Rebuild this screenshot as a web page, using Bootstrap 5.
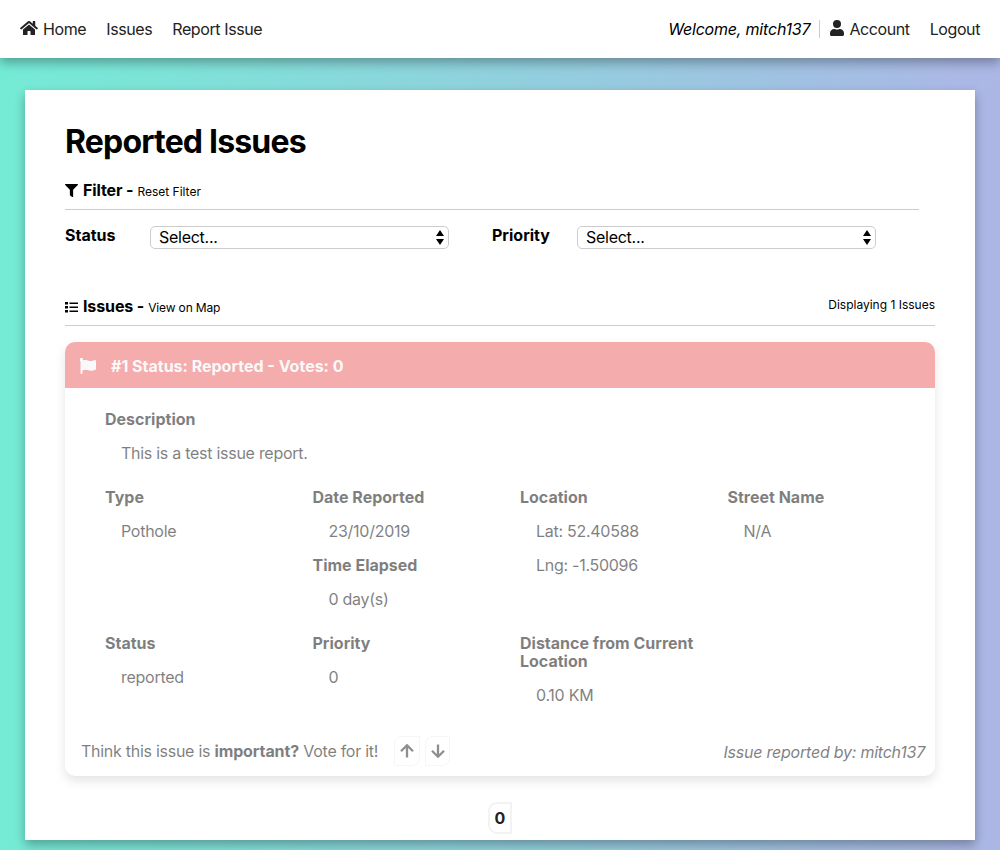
<!DOCTYPE html>
<html lang="en">
<head>
<meta charset="utf-8">
<meta name="viewport" content="width=device-width, initial-scale=1">
<title>Reported Issues</title>
<link rel="stylesheet" href="https://cdn.jsdelivr.net/npm/bootstrap@5.3.0/dist/css/bootstrap.min.css">
<style>
html{height:100%;overflow:hidden}
body{height:100%;font-family:Inter,"Liberation Sans",sans-serif;font-size:16px;line-height:18px;letter-spacing:-.27px;color:#000;background:linear-gradient(to right,#74ebd5,#acb6e5);overflow:hidden}
b,strong,dt,h1,h2{font-weight:700}
b,dt{letter-spacing:0}
svg{display:block;flex:none}
em{letter-spacing:-.23px}
.topbar{height:58px;padding:0 20px;background:#fff;box-shadow:0 5px 10px rgba(0,0,0,.3)}
.topbar a{color:#222;text-decoration:none;letter-spacing:-.4px}
.topbar em{letter-spacing:-.2px}
.welcome{padding-right:9px;border-right:1px solid #ccc}
.sheet{height:750px;margin:32px 25px 0;padding:32px 40px 0;background:#fff;box-shadow:0 5px 10px rgba(0,0,0,.3)}
.title{font-size:32px;line-height:40px;height:38px;letter-spacing:-.82px;margin:0}
.section{height:35px;border-bottom:1px solid #ccc}
.section h2{font-size:16px;line-height:18px;letter-spacing:-.12px;margin:0}
.section a,.shown{font-size:12px;letter-spacing:0;color:#000;text-decoration:none}
.picker{width:299px;height:23px;padding:0 4px 1px 8px;border:1px solid #ccc;border-radius:5px;background:#fff}
.issue{height:434px;margin-top:16px;border-radius:10px;opacity:.5;box-shadow:0 5px 10px rgba(0,0,0,.2);overflow:hidden;background:#fff}
.issue-head{height:46px;padding:2px 15px 0;background:#eb5b5b;color:#f5f5f5}
.facts{padding:22px 0 0 40px;height:348px}
.facts dl{margin:0 0 10px}
.facts dt{margin-bottom:16px}
.facts dd{margin:0 0 16px 16px}
.vote{width:26px;height:30px;border:1px solid #eee;background:#fff}
.vote-up{border-radius:8px 0 8px 0}
.vote-down{margin-left:5px;width:25px;border-radius:8px 0 8px 0}
.pageno{width:24px;height:32px;border:2px solid #f3f3f3;border-radius:9px 0 0 9px;color:#222}
</style>
</head>
<body>
<nav class="topbar d-flex align-items-center justify-content-between">
  <div class="d-flex" style="gap:20px">
    <a href="#" class="d-flex"><svg style="margin-right:5px" width="18" height="16" viewBox="0 0 576 512" fill="#222"><path d="M281 149 96 301v164a16 16 0 0 0 16 16h112a16 16 0 0 0 16-16v-97a16 16 0 0 1 16-16h64a16 16 0 0 1 16 16v97a16 16 0 0 0 16 16h112a16 16 0 0 0 16-16V301L295 149a12 12 0 0 0-14 0zm290 103-83-69V44a12 12 0 0 0-12-12h-56a12 12 0 0 0-12 12v73l-90-74a48 48 0 0 0-61 0L4 252a12 12 0 0 0-2 16l26 31a12 12 0 0 0 17 2L281 107a12 12 0 0 1 15 0l235 194a12 12 0 0 0 17-2l25-31a12 12 0 0 0-2-16z"/></svg><span>Home</span></a>
    <a href="#">Issues</a>
    <a href="#">Report Issue</a>
  </div>
  <div class="d-flex">
    <em class="welcome">Welcome, mitch137</em>
    <a href="#" class="d-flex" style="margin-left:10px"><svg style="margin-right:5px" width="14" height="16" viewBox="0 0 448 512" fill="#222"><path d="M224 256a128 128 0 1 0 0-256 128 128 0 0 0 0 256zm90 32h-17a174 174 0 0 1-146 0h-17C60 288 0 348 0 422v42c0 27 21 48 48 48h352c27 0 48-21 48-48v-42c0-74-60-134-134-134z"/></svg><span>Account</span></a>
    <a href="#" class="ps-1 ms-3">Logout</a>
  </div>
</nav>
<main class="sheet">
  <h1 class="title">Reported Issues</h1>
  <div class="section d-flex align-items-start" style="margin:15px 16px 0 0">
    <svg style="margin:9px 5px 0 0" width="13" height="13" viewBox="0 0 512 512"><path d="M488 0H24C3 0-8 26 7 41l185 185v206c0 8 4 15 10 20l80 56c16 11 38 0 38-20V226L505 41c15-15 4-41-17-41z"/></svg>
    <h2 style="padding-top:6px">Filter -</h2><a href="#" class="ms-1" style="padding-top:8px">Reset Filter</a>
  </div>
  <div class="d-flex" style="padding-top:16px;height:87px">
    <b style="width:85px">Status</b>
    <div class="picker d-flex align-items-center justify-content-between"><span>Select...</span><svg width="8" height="16" viewBox="0 0 8 16"><path d="M4 1 8 7H0zM4 16 0 10h8z"/></svg></div>
    <b style="width:85px;margin-left:43px">Priority</b>
    <div class="picker d-flex align-items-center justify-content-between"><span>Select...</span><svg width="8" height="16" viewBox="0 0 8 16"><path d="M4 1 8 7H0zM4 16 0 10h8z"/></svg></div>
  </div>
  <div class="section d-flex align-items-start" style="height:29px">
    <svg style="margin:4px 5px 0 0" width="13" height="12" viewBox="0 0 13 12"><path d="M0 1h3v2.600H0zM0 5h3v2.600H0zM0 9h3v2.600H0zM4.500 1.500H13v1.600H4.500zM4.500 5.500H13v1.600H4.500zM4.500 9.500H13v1.600H4.500z"/></svg>
    <h2>Issues -</h2><a href="#" class="ms-1" style="padding-top:2px;letter-spacing:-.15px">View on Map</a>
    <span class="shown ms-auto" style="margin-top:-1px">Displaying 1 Issues</span>
  </div>
  <article class="issue">
    <header class="issue-head d-flex align-items-center">
      <svg width="16" height="16" viewBox="0 0 512 512" fill="#f5f5f5"><path d="M350 98c-60 0-110-34-185-34-27 0-52 5-75 14A56 56 0 1 0 16 103v385a24 24 0 0 0 24 24h16a24 24 0 0 0 24-24v-94c28-13 64-22 114-22 61 0 111 34 185 34 54 0 96-18 121-36a32 32 0 0 0 12-26V94c0-23-24-38-45-28-34 15-76 32-117 32z"/></svg>
      <b style="margin-left:15px">#1 Status: Reported - Votes: 0</b>
    </header>
    <div class="facts">
      <dl style="margin-bottom:26px"><dt>Description</dt><dd>This is a test issue report.</dd></dl>
      <div class="row g-0">
        <dl class="col-3"><dt>Type</dt><dd>Pothole</dd></dl>
        <dl class="col-3"><dt>Date Reported</dt><dd>23/10/2019</dd><dt>Time Elapsed</dt><dd>0 day(s)</dd></dl>
        <dl class="col-3"><dt>Location</dt><dd>Lat: 52.40588</dd><dd>Lng: -1.50096</dd></dl>
        <dl class="col-3"><dt>Street Name</dt><dd>N/A</dd></dl>
      </div>
      <div class="row g-0">
        <dl class="col-3"><dt>Status</dt><dd>reported</dd></dl>
        <dl class="col-3"><dt>Priority</dt><dd>0</dd></dl>
        <dl class="col-3"><dt>Distance from Current Location</dt><dd>0.10 KM</dd></dl>
      </div>
    </div>
    <footer class="d-flex align-items-center" style="height:30px;padding:0 10px 0 16px">
      <span style="margin-right:16px">Think this issue is <b style="letter-spacing:-.1px">important?</b> Vote for it!</span>
      <span class="vote vote-up d-flex align-items-center justify-content-center"><svg width="14" height="14" viewBox="0 0 14 14" fill="none" stroke="#222" stroke-width="2.3"><path d="M7 13.500V1.500M1 7.300l6-6 6 6"/></svg></span>
      <span class="vote vote-down d-flex align-items-center justify-content-center"><svg width="14" height="14" viewBox="0 0 14 14" fill="none" stroke="#222" stroke-width="2.3"><path d="M7 .5v12M1 6.700l6 6 6-6"/></svg></span>
      <em class="ms-auto" style="padding-top:2px">Issue reported by: mitch137</em>
    </footer>
  </article>
  <div class="pageno d-flex align-items-center justify-content-center mx-auto" style="margin-top:26px"><b>0</b></div>
</main>
<script src="https://cdn.jsdelivr.net/npm/bootstrap@5.3.0/dist/js/bootstrap.bundle.min.js"></script>
</body>
</html>
